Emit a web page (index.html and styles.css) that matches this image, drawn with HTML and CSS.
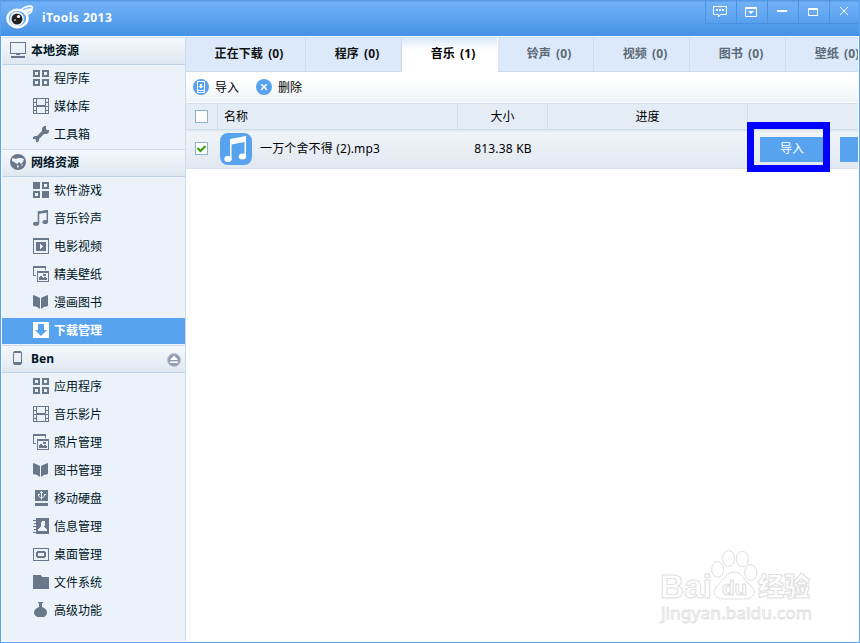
FILE: index.html
```
<!DOCTYPE html>
<html lang="zh-CN">
<head>
  <meta charset="UTF-8">
  <meta name="viewport" content="width=device-width, initial-scale=1.0">
  <title>iTools 2013</title>
  <link rel="stylesheet" href="styles.css">
</head>
<body>
  <svg class="sprite" width="0" height="0">
    <symbol id="i-apps" viewBox="0 0 16 16"><path fill="none" stroke="currentColor" stroke-width="2" d="M1 1h5v5H1zM10 1h5v5h-5zM1 10h5v5H1zM10 10h5v5h-5z"/></symbol>
    <symbol id="i-film" viewBox="0 0 16 16"><path fill="none" stroke="currentColor" d="M.5.5h15v15H.5zM3.500 0v16M12.500 0v16M0 4.500h3M0 8.500h3M0 12.500h3M13 4.500h3M13 8.500h3M13 12.500h3"/><path fill="currentColor" d="M4 7h8v2H4z"/></symbol>
    <symbol id="i-tool" viewBox="0 0 16 16"><path fill="currentColor" d="M11 0h2v3l1 1h2v2l-2 2h-3l-5 5v2l-1 1H3v-2l-1-1H0v-2l2-1h2l5-5V2z"/></symbol>
    <symbol id="i-games" viewBox="0 0 16 16"><path fill="currentColor" d="M0 0h7v7H0zM9 9h7v7H9z"/><path fill="none" stroke="currentColor" stroke-width="2" d="M10 1h5v5h-5zM1 10h5v5H1z"/></symbol>
    <symbol id="i-music" viewBox="0 0 16 16"><path fill="none" stroke="currentColor" stroke-width="1.500" d="M5.500 13.500V2.200L14.300.9v10.800"/><path fill="currentColor" d="M5 1.500L15 0v2.500L5 4z"/><ellipse cx="3" cy="13.700" rx="3" ry="2" fill="currentColor"/><ellipse cx="12.200" cy="12" rx="2.800" ry="2" fill="currentColor"/></symbol>
    <symbol id="i-video" viewBox="0 0 16 16"><path fill="none" stroke="currentColor" d="M.5.5h15v15H.5zM0 1.500h16"/><path fill="currentColor" fill-rule="evenodd" d="M3 4h10v9H3zM7 6v5l3-2.500z"/></symbol>
    <symbol id="i-photo" viewBox="0 0 16 16"><path fill="currentColor" fill-rule="evenodd" d="M0 0h13v4h-1V2H1v7h2v1H0zM4 5h12v11H4zM5 7v8h10V7z"/><path fill="currentColor" d="M6 14v-3l2-1 2 2 2-1 2 1v2zM10 8h3v2h-3z"/></symbol>
    <symbol id="i-book" viewBox="0 0 16 16"><path fill="currentColor" d="M0 1l3 1 4 2v11l-3-2-4-1zM15 1l-3 1-4 2v11l3-2 4-1z"/></symbol>
    <symbol id="i-down" viewBox="0 0 16 16"><path fill="currentColor" fill-rule="evenodd" d="M0 0h16v16H0zM5 2v6H2l6 6 6-6h-3V2z"/></symbol>
    <symbol id="i-disk" viewBox="0 0 16 16"><path fill="currentColor" d="M2 0h13v11H2zM2 13h13v3H2z"/><path fill="none" stroke="#ebf2fa" d="M8.500 1.500v8M7 3l1.500-1.500L10 3M5.500 4v2l3 2.500 3-2.500V4M5 4.500h2M11 4.500h2"/></symbol>
    <symbol id="i-contact" viewBox="0 0 16 16"><path fill="currentColor" d="M3 0h13v16H3zM0 2h4v1H0zM1 5h3v1H1zM0 8h4v1H0zM1 11h3v1H1zM0 14h4v1H0z"/><path fill="#ebf2fa" d="M8 4l1-1h2l1 1v3l-1 1v1l3 2v2H5v-2l3-2V8z"/></symbol>
    <symbol id="i-desk" viewBox="0 0 16 16"><path fill="currentColor" fill-rule="evenodd" d="M0 2h16v13H0zM1 3v11h14V3zM3 5h10v7H3zM5 7v3h6V7z"/><path fill="#ebf2fa" d="M3 5h1v1H3zM12 5h1v1h-1zM3 11h1v1H3zM12 11h1v1h-1z"/></symbol>
    <symbol id="i-folder" viewBox="0 0 16 16"><path fill="currentColor" d="M0 1h7l2 2h7v12H0z"/></symbol>
    <symbol id="i-flask" viewBox="0 0 16 16"><path fill="currentColor" d="M5 0h5v1H9v4c3 1 5 3 5 5.500 0 2-1.500 4-3 4.500H4.500C2.500 14.500 1 12.500 1 10.500 1 8 3 6 6 5V1H5z"/></symbol>
  </svg>

  <div class="window">
    <header class="titlebar">
      <svg class="logo" width="30" height="26" viewBox="0 0 30 26">
        <path d="M14 7Q20 2 26 2q3 1 0 3.500-5 3-9 5M19 7q6-3 8-1 0 3-8 6" fill="#8cc0f8" stroke="#fff" stroke-width="1.600"/>
        <ellipse cx="12.500" cy="14.500" rx="10" ry="8.700" fill="#69abf4" stroke="#fff" stroke-width="2.500"/>
        <circle cx="12" cy="15" r="7" fill="#fff"/>
        <circle cx="12" cy="15" r="5.500" fill="#222"/>
        <circle cx="13.500" cy="12.500" r="1.600" fill="#fff"/><circle cx="10" cy="16" r="1" fill="#aaa"/>
      </svg>
      <h1>iTools 2013</h1>
      <div class="window-buttons">
        <span><svg width="16" height="14" viewBox="0 0 16 14"><path d="M1.500 1.500h13v8H8.500L6.500 12V9.500h-5z" fill="none" stroke="#fff"/><path fill="#fff" d="M4 4h2v2H4zM7 4h2v2H7zM10 4h2v2h-2z"/></svg></span>
        <span><svg width="16" height="14" viewBox="0 0 16 14"><path d="M3 3.500h10M2.500 2.500h11v9h-11z" fill="none" stroke="#fff"/><path fill="#fff" d="M5 6h6L8 9z"/></svg></span>
        <span><svg width="16" height="14" viewBox="0 0 16 14"><path d="M3 5h10v2H3z" fill="#fff"/></svg></span>
        <span><svg width="16" height="14" viewBox="0 0 16 14"><path d="M3.500 3.500h9v7h-9zM3 4.500h10" fill="none" stroke="#fff"/></svg></span>
        <span><svg width="16" height="14" viewBox="0 0 16 14"><path d="M4 2l8 8M12 2l-8 8" fill="none" stroke="#fff"/></svg></span>
      </div>
    </header>

    <div class="body">
      <nav class="sidebar">
        <h2>
          <svg class="icon" viewBox="0 0 16 16"><path fill="none" stroke="currentColor" d="M.5.5h15v11H.5z"/><path fill="currentColor" d="M6 12h4v1H6zM1 14h14v2H1z"/></svg>
          本地资源
        </h2>
        <ul>
          <li><svg class="icon"><use href="#i-apps"/></svg>程序库</li>
          <li><svg class="icon"><use href="#i-film"/></svg>媒体库</li>
          <li><svg class="icon smooth"><use href="#i-tool"/></svg>工具箱</li>
        </ul>
        <h2>
          <svg class="icon smooth" viewBox="0 0 16 16"><circle cx="8" cy="8" r="8" fill="currentColor"/><path fill="#ebf2fa" d="M2 4l4 1 2-1h3l3 1-1 3-2 2-2-2-2 2-3-2-2-1zM7 11l2 1-1 2-1-1zM11 11l2-1-1 2z"/></svg>
          网络资源
        </h2>
        <ul>
          <li><svg class="icon"><use href="#i-games"/></svg>软件游戏</li>
          <li><svg class="icon smooth"><use href="#i-music"/></svg>音乐铃声</li>
          <li><svg class="icon"><use href="#i-video"/></svg>电影视频</li>
          <li><svg class="icon"><use href="#i-photo"/></svg>精美壁纸</li>
          <li><svg class="icon smooth"><use href="#i-book"/></svg>漫画图书</li>
          <li class="selected"><svg class="icon smooth"><use href="#i-down"/></svg>下载管理</li>
        </ul>
        <h2>
          <svg class="icon smooth" viewBox="0 0 16 16"><rect x="3.500" y="1.500" width="8" height="13" rx="1.500" fill="none" stroke="currentColor"/><path fill="currentColor" d="M4 1h7v2H4zM4 12h7v2H4z"/></svg>
          Ben
          <svg class="eject" width="16" height="16" viewBox="0 0 16 16"><circle cx="8" cy="8" r="6.500" fill="#929eb0" stroke="#bcc6d2"/><path fill="#fff" d="M8 3.500L12 8H4zM4 9.500h8v1.500H4z"/></svg>
        </h2>
        <ul>
          <li><svg class="icon"><use href="#i-apps"/></svg>应用程序</li>
          <li><svg class="icon"><use href="#i-film"/></svg>音乐影片</li>
          <li><svg class="icon"><use href="#i-photo"/></svg>照片管理</li>
          <li><svg class="icon smooth"><use href="#i-book"/></svg>图书管理</li>
          <li><svg class="icon smooth"><use href="#i-disk"/></svg>移动硬盘</li>
          <li><svg class="icon"><use href="#i-contact"/></svg>信息管理</li>
          <li><svg class="icon"><use href="#i-desk"/></svg>桌面管理</li>
          <li><svg class="icon"><use href="#i-folder"/></svg>文件系统</li>
          <li><svg class="icon smooth"><use href="#i-flask"/></svg>高级功能</li>
        </ul>
      </nav>

      <main class="content">
        <div class="tabs">
          <div class="tab dark first">正在下载 (0)</div>
          <div class="tab dark">程序 (0)</div>
          <div class="tab active">音乐 (1)</div>
          <div class="tab">铃声 (0)</div>
          <div class="tab">视频 (0)</div>
          <div class="tab">图书 (0)</div>
          <div class="tab">壁纸 (0)</div>
        </div>

        <div class="toolbar">
          <span class="action">
            <svg width="16" height="16" viewBox="0 0 16 16"><circle cx="8" cy="8" r="8" fill="#58a3f0"/><rect x="4.500" y="2.500" width="7" height="11" fill="none" stroke="#fff"/><path fill="#fff" d="M7 5h2v2h1.500L8 9.500 5.500 7H7zM4 11h8v1H4z"/></svg>
            导入
          </span>
          <span class="action">
            <svg width="16" height="16" viewBox="0 0 16 16"><circle cx="8" cy="8" r="8" fill="#58a3f0"/><path d="M5.200 5.200l5.600 5.600M10.800 5.200l-5.600 5.600" stroke="#fff" stroke-width="1.600"/></svg>
            删除
          </span>
        </div>

        <div class="grid table-head">
          <div class="check"><span class="checkbox"></span></div>
          <div class="name">名称</div>
          <div>大小</div>
          <div>进度</div>
          <div></div>
        </div>
        <div class="grid table-row">
          <div class="check"><span class="checkbox"><svg width="11" height="11" viewBox="0 0 11 11"><path d="M1.500 5l3 3 5-5" fill="none" stroke="#35a010" stroke-width="2.200"/></svg></span></div>
          <div class="name">
            <svg width="32" height="32" viewBox="0 0 32 32"><rect width="32" height="32" rx="8" fill="#58a3f0"/><path fill="#fff" d="M10 6l16-3v20h-1.500V9l-13 2.500V26H10z"/><ellipse cx="8" cy="26" rx="3.700" ry="3" fill="#fff"/><ellipse cx="22.500" cy="23.500" rx="3.700" ry="3" fill="#fff"/></svg>
            一万个舍不得 (2).mp3
          </div>
          <div class="size">813.38 KB</div>
          <div></div>
          <div class="ops">
            <button>导入</button>
            <button></button>
          </div>
        </div>
      </main>
    </div>
  </div>

  <div class="highlight"></div>

  <svg class="watermark" width="170" height="80" viewBox="0 0 170 80">
    <g fill="#fff" stroke="#dedede">
      <text class="wm-brand" x="8" y="50" textLength="52" lengthAdjust="spacingAndGlyphs">Bai</text>
      <ellipse cx="65.700" cy="21.500" rx="6" ry="7.800"/>
      <ellipse cx="76.700" cy="10.500" rx="6" ry="8"/>
      <ellipse cx="90.300" cy="11" rx="6" ry="7.800"/>
      <ellipse cx="98.700" cy="24.500" rx="6" ry="7.800"/>
      <path d="M82 24c8 0 9 7 16 13 7 6 4 14-5 14H72c-11 0-12-9-6-14 7-6 8-13 16-13z"/>
      <text class="wm-du" x="70" y="47" textLength="25" lengthAdjust="spacingAndGlyphs">du</text>
      <text class="wm-cjk" x="106" y="48" textLength="52" lengthAdjust="spacingAndGlyphs">经验</text>
      <text class="wm-url" x="9" y="71" textLength="151" lengthAdjust="spacingAndGlyphs">jingyan.baidu.com</text>
    </g>
  </svg>
</body>
</html>
```

FILE: styles.css
```
:root {
  --blue: #58a3f0;
  --line: #cddcea;
  --side-bg: #ebf2fa;
  --icon: #68788a;
}

* {
  box-sizing: border-box;
}

body {
  margin: 0;
  font-family: "Noto Sans", "Noto Sans CJK SC", sans-serif;
  font-size: 12px;
  color: #000;
  background: #fff;
}

.sprite {
  position: absolute;
}

.window {
  width: 860px;
  height: 643px;
  border: 1px solid var(--blue);
  border-top: none;
  display: flex;
  flex-direction: column;
  overflow: hidden;
}

/* Title bar */
.titlebar {
  height: 36px;
  flex: none;
  display: flex;
  align-items: flex-start;
  background: linear-gradient(#5599e4 0, #5599e4 1px, #70b0f6 2px, #66a9f3 12px, #4492e6);
}

.logo {
  margin: 4px 0 0 4px;
}

.titlebar h1 {
  margin: 9px 0 0 7px;
  font-size: 12px;
  line-height: 18px;
  letter-spacing: 0.5px;
  color: #fff;
}

.window-buttons {
  margin-left: auto;
  display: flex;
  height: 24px;
  border-left: 1px solid #4b93df;
  border-bottom: 1px solid #4b93df;
}

.window-buttons span {
  width: 31px;
  padding: 5px 0 0 6px;
  border-right: 1px solid #4b93df;
}

.window-buttons span:last-child {
  width: 29px;
  border-right: none;
}

.body {
  flex: 1;
  display: flex;
  min-height: 0;
  padding: 1px;
}

/* Sidebar */
.sidebar {
  width: 184px;
  flex: none;
  background: var(--side-bg);
  border-right: 1px solid var(--line);
}

.sidebar h2 {
  margin: 0;
  height: 28px;
  padding: 0 3px 2px 8px;
  display: flex;
  align-items: center;
  gap: 5px;
  font-size: 12px;
  color: #001525;
  border-top: 1px solid var(--line);
  border-bottom: 1px solid #bfd1e7;
  background: linear-gradient(#f4f8fc, #dfe8f1);
}

.sidebar ul {
  margin: 0;
  padding: 0;
  list-style: none;
}

.sidebar li {
  height: 28px;
  padding: 0 0 2px 31px;
  display: flex;
  align-items: center;
  gap: 5px;
  color: #001525;
}

.sidebar li.selected {
  height: 26px;
  margin: 1px 0;
  color: #fff;
  font-weight: bold;
  background: var(--blue);
}

.icon {
  width: 16px;
  height: 16px;
  flex: none;
  color: var(--icon);
  shape-rendering: crispEdges;
}

.icon.smooth {
  shape-rendering: auto;
}

.selected .icon {
  color: #fff;
}

.eject {
  margin: 4px 0 0 auto;
}

/* Tabs */
.content {
  flex: 1;
  min-width: 0;
}

.tabs {
  height: 35px;
  display: flex;
  overflow: hidden;
}

.tab {
  width: 96px;
  flex: none;
  padding: 0 0 2px 7px;
  line-height: 31px;
  text-align: center;
  white-space: nowrap;
  font-weight: bold;
  letter-spacing: 0.1px;
  word-spacing: 2px;
  color: #5d6a75;
  background: #dbe9fa;
  border-top: 1px solid var(--line);
  border-right: 1px solid #cbdcef;
  border-bottom: 1px solid #cbdcef;
}

.tab.first {
  width: 120px;
}

.tab.dark {
  color: #111;
}

.tab.active {
  color: #000;
  background: linear-gradient(#dbe9fa, #fff 12px);
  border-right-color: #fff;
  border-bottom-color: #fff;
}

/* Toolbar */
.toolbar {
  height: 31px;
  padding: 0 7px 1px;
  display: flex;
  align-items: center;
  gap: 17px;
  background: linear-gradient(#fff 30%, #edf3f5);
  border-bottom: 1px solid #fff;
}

.action {
  display: flex;
  align-items: center;
  gap: 6px;
}

/* Download list */
.grid {
  display: grid;
  grid-template-columns: 32px 240px 90px 200px 1fr;
}

.grid > div {
  display: flex;
  align-items: center;
  justify-content: center;
  min-width: 0;
}

.grid > .name {
  justify-content: flex-start;
}

.table-head {
  height: 27px;
  background: #e4edf6;
  border-top: 1px solid #d3e0eb;
  border-bottom: 1px solid #d0dde9;
}

.table-head > div {
  padding-bottom: 1px;
  border-right: 1px solid #d3e0eb;
}

.table-head > div:last-child {
  border-right: none;
}

.table-head .name {
  padding-left: 6px;
}

.table-row {
  height: 39px;
  background: linear-gradient(#dfe8ee, #eef4f7 3px, #e2e8f1);
  border-bottom: 1px solid #d8e1e9;
}

.table-row .name {
  padding: 0 0 2px 2px;
  gap: 8px;
  letter-spacing: 0.15px;
}

.table-row .name svg {
  margin-top: 2px;
}

.table-row .size {
  padding-bottom: 2px;
  letter-spacing: 0.2px;
}

.grid > .check {
  justify-content: flex-start;
  padding-left: 9px;
}

.table-row > .check {
  padding-bottom: 1px;
}

.checkbox {
  width: 13px;
  height: 13px;
  display: block;
  background: #fff;
  border: 1px solid #8fb2c8;
}

.checkbox svg {
  display: block;
}

.grid > .ops {
  justify-content: flex-start;
  padding-left: 12px;
  gap: 14px;
  overflow: hidden;
}

.ops button {
  width: 66px;
  height: 25px;
  flex: none;
  padding: 0 2px 2px 0;
  border: none;
  font: inherit;
  color: #fff;
  background: var(--blue);
}

/* Marker frame over the import button */
.highlight {
  position: absolute;
  left: 747px;
  top: 122px;
  width: 83px;
  height: 50px;
  border: 7px solid #00f;
}

/* Watermark */
.watermark {
  position: absolute;
  left: 652px;
  top: 548px;
}

.wm-brand {
  font: bold 34px "Liberation Sans", sans-serif;
}

.wm-du {
  font: bold 20px "Liberation Sans", sans-serif;
}

.wm-cjk {
  font: 900 26px "Noto Sans CJK SC", sans-serif;
}

.wm-url {
  font: 17px "Noto Sans", sans-serif;
  stroke-width: 0.8;
}
```
